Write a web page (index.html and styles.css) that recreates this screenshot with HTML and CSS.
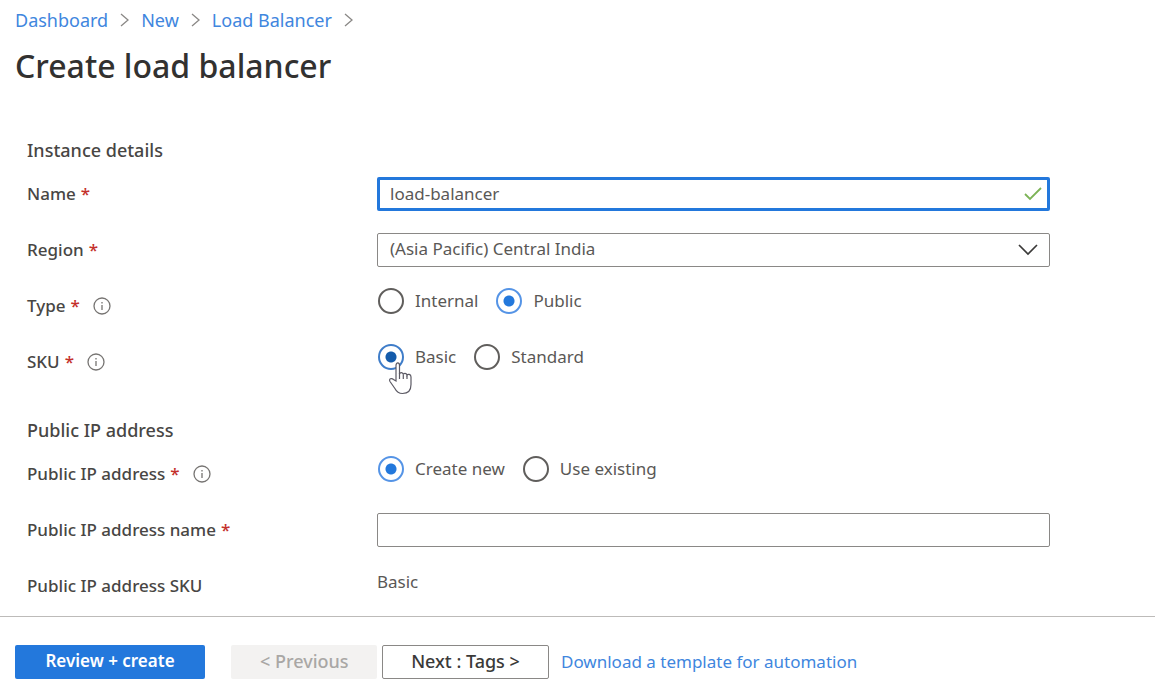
FILE: index.html
```html
<!DOCTYPE html>
<html lang="en">
<head>
<meta charset="utf-8">
<meta name="viewport" content="width=device-width, initial-scale=1">
<title>Create load balancer</title>
<link rel="stylesheet" href="styles.css">
</head>
<body class="page">
<header class="top">
  <nav class="crumbs" aria-label="Breadcrumb">
    <a href="#">Dashboard</a>
    <svg class="sep" viewBox="0 0 9 14" aria-hidden="true"><path d="M1 1l7 6-7 6"/></svg>
    <a href="#">New</a>
    <svg class="sep" viewBox="0 0 9 14" aria-hidden="true"><path d="M1 1l7 6-7 6"/></svg>
    <a href="#">Load Balancer</a>
    <svg class="sep" viewBox="0 0 9 14" aria-hidden="true"><path d="M1 1l7 6-7 6"/></svg>
  </nav>
  <h1 class="title">Create load balancer</h1>
</header>
<main class="content">
  <form id="lb-form" class="form">
    <h2 class="section">Instance details</h2>
    <div class="row">
      <label class="label" for="name">Name <span class="req">*</span></label>
      <div class="field">
        <input class="box box-active" id="name" type="text" value="load-balancer">
        <svg class="mark check" viewBox="0 0 18 14" aria-hidden="true"><path d="M1 7l5 5L17 1"/></svg>
      </div>
    </div>
    <div class="row">
      <label class="label" for="region">Region <span class="req">*</span></label>
      <div class="field">
        <select class="box" id="region"><option>(Asia Pacific) Central India</option></select>
        <svg class="mark chevron" viewBox="0 0 20 12" aria-hidden="true"><path d="M1 1l9 9 9-9"/></svg>
      </div>
    </div>
    <div class="row">
      <div class="label" id="type-label">Type <span class="req">*</span>
        <svg class="info" viewBox="0 0 18 18" aria-hidden="true"><circle cx="9" cy="9" r="8"/><path d="M9 8v5M9 5v1.400"/></svg>
      </div>
      <div class="choices" role="radiogroup" aria-labelledby="type-label">
        <label class="choice"><input class="radio" type="radio" name="type">Internal</label>
        <label class="choice"><input class="radio" type="radio" name="type" checked>Public</label>
      </div>
    </div>
    <div class="row">
      <div class="label" id="sku-label">SKU <span class="req">*</span>
        <svg class="info" viewBox="0 0 18 18" aria-hidden="true"><circle cx="9" cy="9" r="8"/><path d="M9 8v5M9 5v1.400"/></svg>
      </div>
      <div class="choices" role="radiogroup" aria-labelledby="sku-label">
        <label class="choice"><input class="radio radio-hover" type="radio" name="sku" checked>Basic
          <svg class="pointer" viewBox="0 0 26 34" aria-hidden="true"><path d="M8 20V4.500C8 1 11.500 1 11.500 4.500V13c.5-2 3.500-2 3.800.5.5-1.800 3.400-1.500 3.700.700.700-1.500 4-1.200 4 1.800v7.500c0 6-3.500 9-8.500 9-4 0-6-1.800-7.600-5L2 20.500C.5 18 3.500 16.500 5.500 18.500z"/><path d="M11.500 12v6M15.300 13.500V18M19 14.500V18"/></svg>
        </label>
        <label class="choice"><input class="radio" type="radio" name="sku">Standard</label>
      </div>
    </div>
    <h2 class="section">Public IP address</h2>
    <div class="row">
      <div class="label" id="ip-label">Public IP address <span class="req">*</span>
        <svg class="info" viewBox="0 0 18 18" aria-hidden="true"><circle cx="9" cy="9" r="8"/><path d="M9 8v5M9 5v1.400"/></svg>
      </div>
      <div class="choices" role="radiogroup" aria-labelledby="ip-label">
        <label class="choice"><input class="radio" type="radio" name="ip" checked>Create new</label>
        <label class="choice"><input class="radio" type="radio" name="ip">Use existing</label>
      </div>
    </div>
    <div class="row">
      <label class="label" for="ip-name">Public IP address name <span class="req">*</span></label>
      <div class="field"><input class="box" id="ip-name" type="text"></div>
    </div>
    <div class="row">
      <div class="label">Public IP address SKU</div>
      <div class="value">Basic</div>
    </div>
  </form>
</main>
<footer class="actions">
  <button class="btn btn-primary" type="submit" form="lb-form">Review + create</button>
  <div class="steps">
    <button class="btn btn-prev" type="button" disabled>&lt; Previous</button>
    <button class="btn btn-next" type="button">Next : Tags &gt;</button>
  </div>
  <a class="template" href="#">Download a template for automation</a>
</footer>
</body>
</html>
```
FILE: styles.css
```css
* { box-sizing: border-box; }

.page {
  margin: 0;
  min-height: 100vh;
  display: flex;
  flex-direction: column;
  background: #fff;
  color: #484644;
  font: 400 17px/26px "Segoe UI", "Noto Sans", sans-serif;
}

a { color: #4086de; text-decoration: none; }

.top { padding: 7px 15px 0; }
.crumbs { display: flex; align-items: center; gap: 12px; font-size: 18px; }
.sep { width: 9px; height: 14px; fill: none; stroke: #8a8886; stroke-width: 1.3; }
.title { margin: 12px 0 0; font-size: 32px; line-height: 42px; font-weight: 500; color: #323130; }

.content { flex: 1; padding: 50px 105px 12px 27px; }
.section { margin: 0 0 14px; font-size: 18px; line-height: 26px; font-weight: 500; }
.row { display: grid; grid-template-columns: 350px minmax(0, 1fr); min-height: 34px; margin-bottom: 22px; }
.row + .section { margin-top: 38px; }
.row:last-child { margin-bottom: 0; }
.label { display: flex; align-items: center; gap: 5px; font-weight: 500; }
.req { color: #c4302b; }
.info { width: 18px; height: 18px; margin-left: 8px; fill: none; stroke: #767472; stroke-width: 1.3; }

.field { position: relative; }
.box {
  display: block;
  width: 100%;
  height: 34px;
  padding: 0 12px 2px;
  border: 1px solid #8a8886;
  border-radius: 2px;
  background: #fff;
  color: #5a5856;
  font: inherit;
  appearance: none;
  outline: none;
}
.box-active { border: 3px solid #2378dc; padding: 0 10px 2px; }
.mark { position: absolute; top: 50%; transform: translateY(-50%); fill: none; pointer-events: none; }
.check { right: 8px; width: 18px; height: 14px; stroke: #7cb356; stroke-width: 1.8; }
.chevron { right: 12px; width: 20px; height: 12px; stroke: #3b3a39; stroke-width: 1.7; }

.choices { display: flex; align-items: flex-start; gap: 18px; margin-top: -1px; padding-left: 1px; color: #5a5856; }
.choice { position: relative; display: flex; align-items: center; gap: 11px; }
.radio {
  appearance: none;
  width: 26px;
  height: 26px;
  margin: 0;
  border: 2px solid #605e5c;
  border-radius: 50%;
  background: #fff;
}
.radio:checked { border-color: #5594e6; background: radial-gradient(circle, #2378dc 5px, #fff 6px); }
.radio-hover:checked { border-color: #3f7dc9; background: radial-gradient(circle, #155cab 5px, #fff 6px); }
.pointer { position: absolute; left: 10px; top: 17px; width: 26px; height: 34px; fill: #fff; stroke: #5c5a64; stroke-width: 1.2; }
.value { color: #5a5856; }

.actions { display: flex; align-items: center; padding: 28px 15px 20px; border-top: 1px solid #bdbbb9; }
.btn { height: 34px; padding: 0 28px 2px; border: 1px solid transparent; border-radius: 2px; font: inherit; font-weight: 500; white-space: nowrap; }
.btn-primary { width: 190px; background: #2378dc; color: #fff; font-weight: 600; }
.steps { display: flex; gap: 5px; margin: 0 12px 0 26px; }
.btn-prev, .btn-next { font-size: 18px; }
.btn-prev { width: 146px; background: #f3f2f1; color: #a9a7a5; }
.btn-next { width: 167px; background: #fff; border-color: #8a8886; color: #3b3a39; }
```
